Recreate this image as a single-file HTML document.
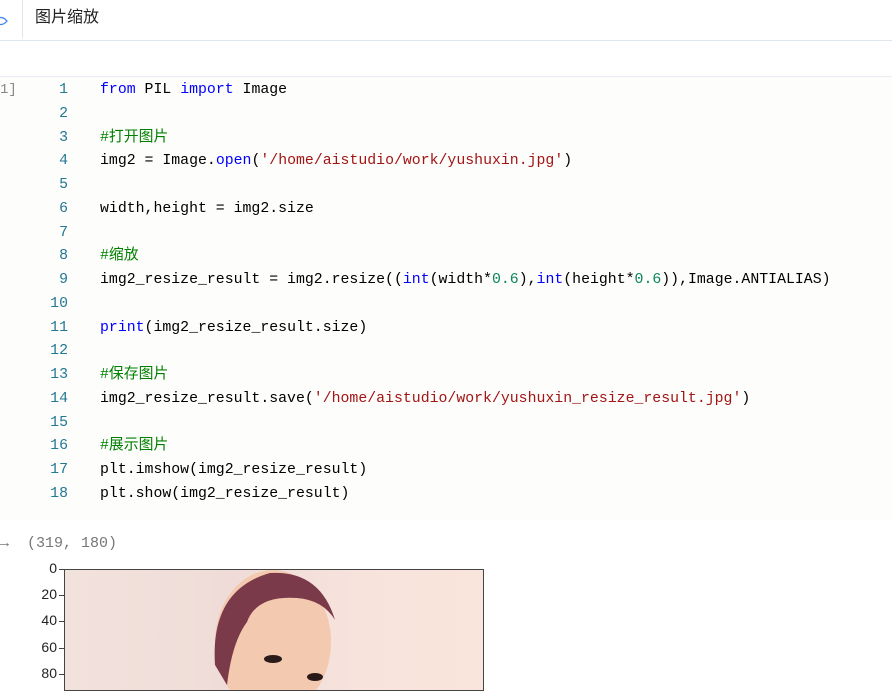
<!DOCTYPE html>
<html><head><meta charset="utf-8"><style>
body{margin:0;width:892px;height:683px;overflow:hidden;background:#fff;font-family:"Liberation Sans","Noto Sans CJK SC",sans-serif;position:relative}
.hdr{position:absolute;left:0;top:0;width:892px;height:40px;border-bottom:1px solid #dfe6ee;background:#fff}
.hdr .sep{position:absolute;left:22px;top:0;width:1px;height:38px;background:#e6e6e6}
.hdr .t{position:absolute;left:35px;top:3px;font-size:16px;color:#222}
.line2{position:absolute;left:0;top:76px;width:892px;height:1px;background:#e8edf2}
.code{position:absolute;left:0;top:77px;width:892px;height:443px;background:#fdfdfb}
.ln,.src{position:absolute;top:79px;font-family:"Liberation Mono","Noto Sans CJK SC",monospace;font-size:14.85px;line-height:23.76px;white-space:pre}
.ln{left:40px;width:28px;text-align:right;color:#237893}
.src{left:100px;color:#000}
.k{color:#0000ff}.c{color:#008000}.s{color:#a31515}.n{color:#098658}
.pr{position:absolute;left:0;top:82px;font-size:14px;color:#888;font-family:"Liberation Mono",monospace}
.out{position:absolute;left:0;top:535px;font-family:"Liberation Mono",monospace;font-size:15px;color:#777;white-space:pre}
.ax{position:absolute;left:64px;top:569px;width:418px;height:120px;border:1px solid #444;background:linear-gradient(90deg,#f2e2dc,#efdcd8 40%,#f7e3dc 70%,#fae5dc)}
.yl{position:absolute;left:18px;width:39px;text-align:right;font-size:14px;color:#222;font-family:"Liberation Sans",sans-serif}
.tk{position:absolute;left:59px;width:5px;height:1px;background:#444}
</style></head><body>
<div class="hdr"><div class="sep"></div><div class="t">图片缩放</div>
<svg style="position:absolute;left:-6px;top:14px" width="14" height="14"><path d="M1 7 Q7 0 13 7 Q7 14 1 7Z" fill="none" stroke="#3b82f6" stroke-width="1.3"/></svg></div>
<div class="line2"></div>
<div class="code"></div>
<div class="pr">1]</div>
<div class="ln">1
2
3
4
5
6
7
8
9
10
11
12
13
14
15
16
17
18</div>
<div class="src"><span class="k">from</span> PIL <span class="k">import</span> Image

<span class="c">#打开图片</span>
img2 = Image.<span class="k">open</span>(<span class="s">'/home/aistudio/work/yushuxin.jpg'</span>)

width,height = img2.size

<span class="c">#缩放</span>
img2_resize_result = img2.resize((<span class="k">int</span>(width*<span class="n">0.6</span>),<span class="k">int</span>(height*<span class="n">0.6</span>)),Image.ANTIALIAS)

<span class="k">print</span>(img2_resize_result.size)

<span class="c">#保存图片</span>
img2_resize_result.save(<span class="s">'/home/aistudio/work/yushuxin_resize_result.jpg'</span>)

<span class="c">#展示图片</span>
plt.imshow(img2_resize_result)
plt.show(img2_resize_result)</div>
<div class="out">→  (319, 180)</div>
<div class="ax">
<svg width="418" height="120" style="position:absolute;left:0;top:0">
<ellipse cx="208" cy="72" rx="58" ry="72" fill="#f3c9b0"/>
<path d="M150 95 Q145 20 205 3 Q255 0 270 50 Q258 30 232 28 Q192 25 182 52 Q167 72 162 115Z" fill="#7a3a4a"/>
<ellipse cx="208" cy="89" rx="9" ry="4" fill="#2a1a1a"/>
<ellipse cx="250" cy="107" rx="8" ry="4" fill="#2a1a1a"/>
</svg></div>
<div class="yl" style="top:560px">0</div><div class="tk" style="top:569px"></div>
<div class="yl" style="top:586px">20</div><div class="tk" style="top:595px"></div>
<div class="yl" style="top:612px">40</div><div class="tk" style="top:621px"></div>
<div class="yl" style="top:639px">60</div><div class="tk" style="top:648px"></div>
<div class="yl" style="top:665px">80</div><div class="tk" style="top:674px"></div>
</body></html>
